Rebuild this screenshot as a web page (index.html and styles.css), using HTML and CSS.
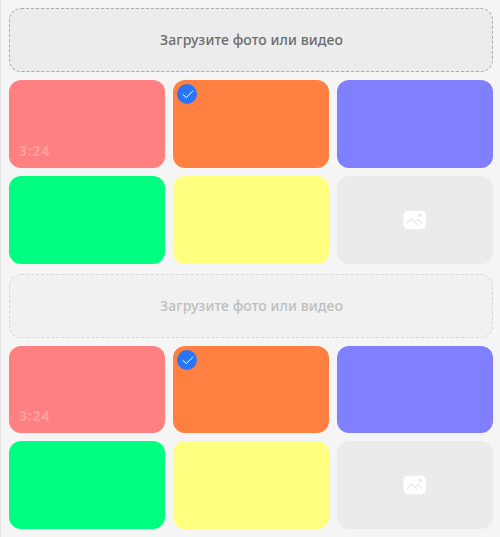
FILE: index.html
```
<!DOCTYPE html>
<html lang="ru">
<head>
<meta charset="utf-8">
<title>Галерея</title>
<link rel="stylesheet" href="styles.css">
</head>
<body>
<main class="page">
  <section class="gallery">
    <button class="upload">Загрузите фото или видео</button>
    <div class="tile red"><span class="duration">3:24</span></div>
    <div class="tile orange"><span class="check"><svg viewBox="0 0 20 20"><path d="M5.800 10.300l3.500 3.300L16.300 6.500"/></svg></span></div>
    <div class="tile blue"></div>
    <div class="tile green"></div>
    <div class="tile yellow"></div>
    <div class="tile empty"><svg class="picture" viewBox="0 0 24 20"><rect x=".5" y=".8" width="22.600" height="18.400" rx="4.500"/><path d="M4 13.500l4.500-4.500 6 6M12 12l3-2.500 4 4"/><circle cx="17.300" cy="5.300" r="2"/></svg></div>
  </section>
  <section class="gallery">
    <button class="upload disabled" disabled>Загрузите фото или видео</button>
    <div class="tile red"><span class="duration">3:24</span></div>
    <div class="tile orange"><span class="check"><svg viewBox="0 0 20 20"><path d="M5.800 10.300l3.500 3.300L16.300 6.500"/></svg></span></div>
    <div class="tile blue"></div>
    <div class="tile green"></div>
    <div class="tile yellow"></div>
    <div class="tile empty"><svg class="picture" viewBox="0 0 24 20"><rect x=".5" y=".8" width="22.600" height="18.400" rx="4.500"/><path d="M4 13.500l4.500-4.500 6 6M12 12l3-2.500 4 4"/><circle cx="17.300" cy="5.300" r="2"/></svg></div>
  </section>
</main>
</body>
</html>
```
FILE: styles.css
```
* { box-sizing: border-box; }
body { margin: 0; background: #f5f5f5; font-family: "Noto Sans", sans-serif; }
.page { height: 537px; padding: 8px 7px 8px 8px; border-left: 1px solid #e3e3e3; overflow: hidden; }
.gallery { display: grid; grid-template-columns: repeat(3, 156px); grid-template-rows: 64px 87.75px 87.75px; gap: 8px; margin-bottom: 10px; }
.upload { grid-column: 1 / -1; border: 1px dashed #aaa; border-radius: 12px; background: #ececec; color: #6d6d6d; font: 500 14px/20px "Noto Sans", sans-serif; letter-spacing: .08px; padding: 0 0 0 1px; }
.disabled { opacity: .4; }
.tile { position: relative; border-radius: 12px; }
.red { background: #ff8080; }
.orange { background: #ff8040; }
.blue { background: #8080ff; }
.green { background: #00ff80; }
.yellow { background: #ffff80; }
.empty { background: #ebebeb; display: flex; align-items: center; justify-content: center; }
.duration { position: absolute; left: 10px; bottom: 7px; color: #ffa0a0; font: 700 14px/20px "Noto Sans", sans-serif; letter-spacing: .8px; }
.check { position: absolute; left: 4px; top: 4px; width: 20px; height: 20px; border-radius: 50%; background: #2975f5; }
.check svg { display: block; fill: none; stroke: #fff; stroke-width: 1; }
.picture { width: 24px; height: 20px; fill: #fff; }
.picture path { fill: none; stroke: #ebebeb; stroke-width: 1.3; }
.picture circle { fill: #ebebeb; }
```
